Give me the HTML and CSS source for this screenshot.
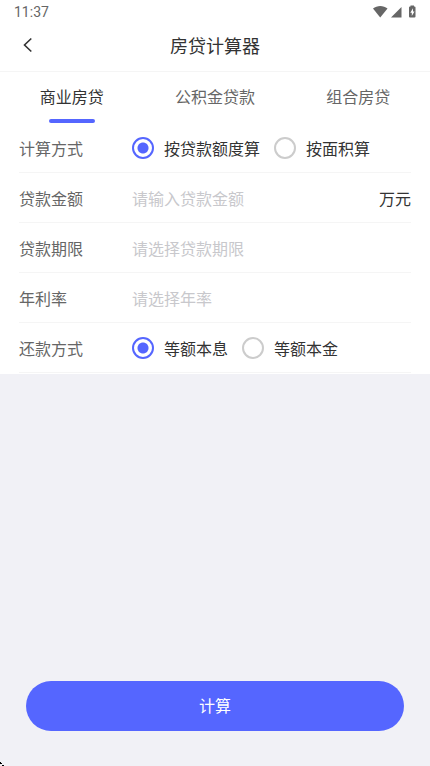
FILE: index.html
```html
<!DOCTYPE html>
<html lang="zh-CN">
<head>
<meta charset="utf-8">
<meta name="viewport" content="width=device-width, initial-scale=1">
<title>房贷计算器</title>
<link rel="stylesheet" href="styles.css">
</head>
<body>
<div class="status">
  <span>11:37</span>
  <svg class="status-icons" width="44" height="14" viewBox="0 0 44 14" aria-hidden="true">
    <path d="M1 3.600C5 0 11.500 0 15.500 3.600L8.200 12.500Z"/>
    <path d="M29.500 2V12.500H19Z"/>
    <path fill-rule="evenodd" d="M38.500 0.500H42V1.500H42.500Q43.500 1.500 43.500 2.500V11.500Q43.500 12.500 42.500 12.500H38Q37 12.500 37 11.500V2.500Q37 1.500 38 1.500H38.500ZM41 3.300L38.300 7.800H39.800V11L42.500 6.500H41Z"/>
  </svg>
</div>
<header class="header">
  <button class="back" type="button" aria-label="返回">
    <svg width="10" height="16" viewBox="0 0 10 16" aria-hidden="true"><path d="M8.300 1.500L1.500 8L8.300 14.500"/></svg>
  </button>
  <h1 class="title">房贷计算器</h1>
</header>
<nav class="tabs">
  <button class="tab tab-active" type="button">商业房贷</button>
  <button class="tab" type="button">公积金贷款</button>
  <button class="tab" type="button">组合房贷</button>
</nav>
<form class="form">
  <div class="fields">
    <div class="row" role="radiogroup" aria-labelledby="method">
      <span class="name" id="method">计算方式</span>
      <div class="choices">
        <label class="choice"><input type="radio" name="method" checked>按贷款额度算</label>
        <label class="choice"><input type="radio" name="method">按面积算</label>
      </div>
    </div>
    <div class="row">
      <label class="name" for="amount">贷款金额</label>
      <input class="control" id="amount" type="text" inputmode="decimal" placeholder="请输入贷款金额">
      <span class="unit">万元</span>
    </div>
    <div class="row">
      <label class="name" for="term">贷款期限</label>
      <select class="control" id="term"><option>请选择贷款期限</option></select>
    </div>
    <div class="row">
      <label class="name" for="rate">年利率</label>
      <select class="control" id="rate"><option>请选择年率</option></select>
    </div>
    <div class="row" role="radiogroup" aria-labelledby="repay">
      <span class="name" id="repay">还款方式</span>
      <div class="choices">
        <label class="choice"><input type="radio" name="repay" checked>等额本息</label>
        <label class="choice"><input type="radio" name="repay">等额本金</label>
      </div>
    </div>
  </div>
  <button class="submit" type="button">计算</button>
</form>
<svg class="corner" width="4" height="4" viewBox="0 0 4 4" aria-hidden="true"><path d="M0 0H1V1H0ZM1 1H2V2H1ZM2 3H4V4H2ZM0 1H1V2H0Z"/></svg>
</body>
</html>
```
FILE: styles.css
```css
* {
  box-sizing: border-box;
}

body {
  display: flex;
  flex-direction: column;
  min-height: 100vh;
  margin: 0;
  background: #f1f1f6;
  color: #333;
  font-family: "Noto Sans CJK SC", sans-serif;
  font-size: 16px;
  line-height: 24px;
}

button,
input,
select {
  margin: 0;
  padding: 0;
  border: 0;
  background: none;
  color: inherit;
  font: inherit;
}

.status {
  display: flex;
  align-items: center;
  justify-content: space-between;
  height: 24px;
  padding: 0 14px;
  background: #fff;
  color: #666;
  font-family: Roboto, sans-serif;
  font-size: 14px;
}

.status-icons {
  fill: #666;
}

.header {
  display: grid;
  grid-template-columns: 56px 1fr 56px;
  align-items: center;
  height: 48px;
  padding-bottom: 6px;
  border-bottom: 1px solid #f5f5f5;
  background: #fff;
}

.back {
  display: flex;
  align-items: center;
  justify-content: center;
  height: 40px;
}

.back svg {
  fill: none;
  stroke: #333;
  stroke-width: 1.6;
}

.title {
  margin: 0;
  font-size: 18px;
  font-weight: 400;
  text-align: center;
}

.tabs {
  display: grid;
  grid-template-columns: repeat(3, 1fr);
  background: #fff;
}

.tab {
  display: flex;
  flex-direction: column;
  align-items: center;
  height: 51px;
  padding-top: 12px;
  color: #666;
}

.tab-active {
  color: #333;
}

.tab-active::after {
  content: "";
  width: 46px;
  height: 4px;
  margin-top: 11px;
  border-radius: 2px;
  background: #5566ff;
}

.form {
  display: flex;
  flex: 1;
  flex-direction: column;
}

.fields {
  padding: 0 19px 1px;
  background: #fff;
}

.row {
  display: flex;
  align-items: center;
  height: 50px;
  border-bottom: 1px solid #f5f5f5;
}

.name {
  flex: 0 0 113px;
  color: #666;
}

.control {
  flex: 1;
  min-width: 0;
  outline: 0;
  appearance: none;
}

select.control,
.control::placeholder {
  color: #c8c8cc;
}

.choices {
  display: flex;
  gap: 14px;
}

.choice {
  display: flex;
  align-items: center;
  gap: 10px;
  white-space: nowrap;
}

.choice input {
  width: 22px;
  height: 22px;
  border: 2px solid #ccc;
  border-radius: 50%;
  appearance: none;
}

.choice input:checked {
  border-color: #5566ff;
  background: radial-gradient(circle, #5566ff 5px, #fff 6px);
}

.submit {
  height: 50px;
  margin: auto 26px 35px;
  padding-bottom: 2px;
  border-radius: 25px;
  background: #5566ff;
  color: #fff;
}

.corner {
  position: absolute;
  bottom: 0;
  left: 0;
}
```
